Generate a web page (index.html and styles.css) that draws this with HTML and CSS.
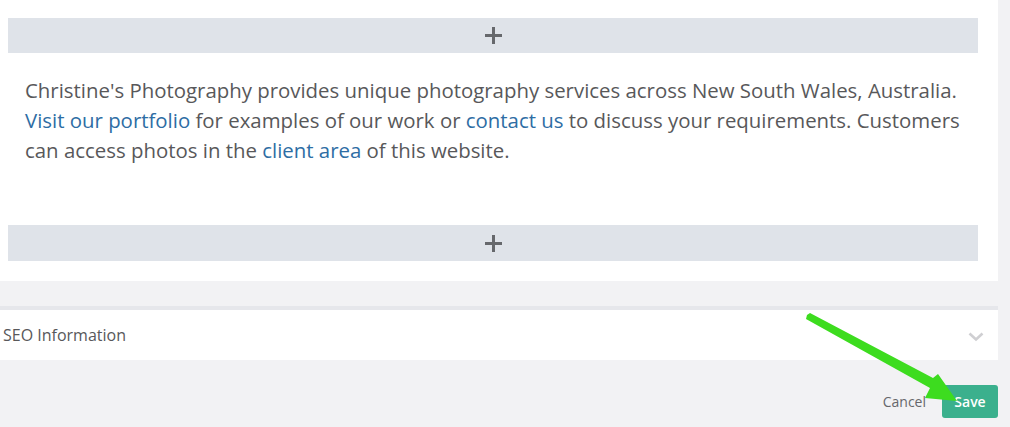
FILE: index.html
```html
<!DOCTYPE html>
<html>
<head>
<meta charset="utf-8">
<link rel="stylesheet" href="styles.css">
</head>
<body>
<div class="page">
  <section class="card">
    <div class="add-bar"><span class="plus"></span></div>
    <p class="content">Christine's Photography provides unique photography services across New South Wales, Australia. <a href="#">Visit our portfolio</a> for examples of our work or <a href="#">contact us</a> to discuss your requirements. Customers can access photos in the <a href="#">client area</a> of this website.</p>
    <div class="add-bar second"><span class="plus"></span></div>
  </section>
  <section class="seo">
    <span class="seo-title">SEO Information</span>
    <svg class="chevron" width="16" height="10" viewBox="0 0 16 10"><path d="M1.5 1.5 L8 7.5 L14.5 1.5" fill="none" stroke="#cfcfd2" stroke-width="2.6"/></svg>
  </section>
  <div class="actions">
    <a class="cancel" href="#">Cancel</a>
    <button class="save">Save</button>
  </div>
  <svg class="arrow" width="1010" height="427" viewBox="0 0 1010 427">
    <polygon points="807,315 810,313 933,378 938,374 957,401 925,398 930,388 806,319" fill="#3ddc1f"/>
  </svg>
</div>
</body>
</html>
```

FILE: styles.css
```css
html, body {
  margin: 0;
  padding: 0;
  background: #f2f2f4;
  font-family: "Open Sans", "Liberation Sans", sans-serif;
}
.page {
  position: relative;
  width: 998px;
  height: 427px;
}
.card {
  background: #fff;
  padding: 18px 20px 20px 8px;
}
.add-bar {
  height: 35px;
  background: #dfe3e9;
  display: flex;
  align-items: center;
  justify-content: center;
}
.add-bar.second {
  height: 36px;
}
.plus {
  position: relative;
  width: 17px;
  height: 17px;
}
.plus::before, .plus::after {
  content: "";
  position: absolute;
  background: #66686c;
}
.plus::before {
  left: 0; right: 0; top: 7px; height: 3px;
}
.plus::after {
  top: 0; bottom: 0; left: 7px; width: 3px;
}
.content {
  margin: 22px 0 0 0;
  padding: 0 0 0 17px;
  height: 150px;
  font-size: 20.4px;
  line-height: 30px;
  color: #58585a;
}
.content a {
  color: #2e6da4;
  text-decoration: none;
}
.seo {
  margin-top: 25px;
  border-top: 4px solid #e6e7eb;
  background: #fff;
  height: 50px;
  display: flex;
  align-items: center;
  justify-content: space-between;
  padding: 0 14px 0 3px;
}
.seo-title {
  font-size: 16px;
  color: #58585a;
}
.chevron {
  margin-top: 3px;
}
.actions {
  display: flex;
  justify-content: flex-end;
  align-items: center;
  margin-top: 25px;
  gap: 16px;
}
.cancel {
  font-size: 14px;
  color: #66676b;
  text-decoration: none;
}
.save {
  width: 56px;
  height: 33px;
  border: 0;
  border-radius: 3px;
  background: #3bb08d;
  color: #fff;
  font-family: "Open Sans", "Liberation Sans", sans-serif;
  font-size: 14px;
  font-weight: 600;
  padding: 0;
}
.arrow {
  position: absolute;
  left: 0;
  top: 0;
  pointer-events: none;
}
```
